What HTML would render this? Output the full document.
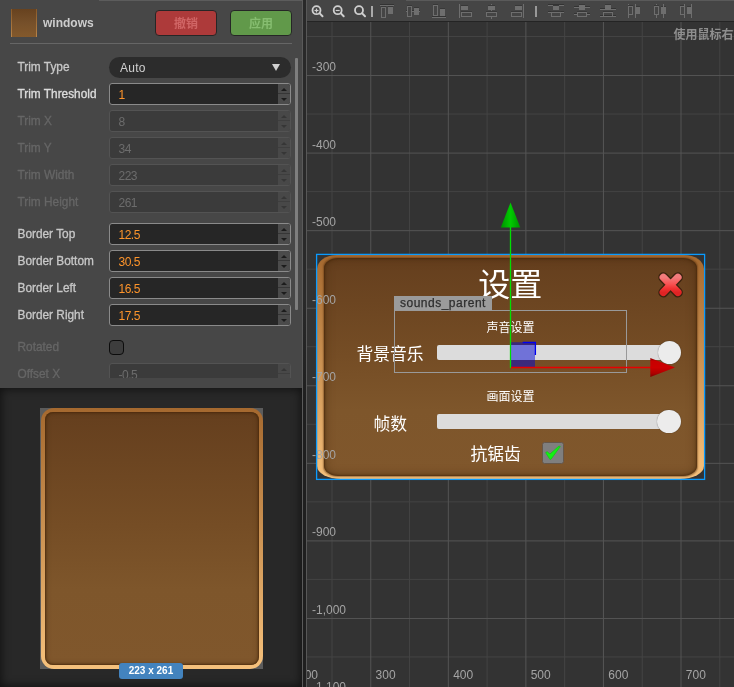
<!DOCTYPE html>
<html><head><meta charset="utf-8"><title>windows</title>
<style>
html,body{margin:0;padding:0}
body{width:734px;height:687px;overflow:hidden;position:relative;background:#474747;font-family:"Liberation Sans","Noto Sans CJK SC",sans-serif;font-size:12px;color:#ccc}
div,span{position:absolute;box-sizing:border-box}
.lbl{left:17.5px;height:14px;line-height:14px;white-space:nowrap;color:#c8c8c8;font-size:11.85px;-webkit-text-stroke:0.3px #c8c8c8}
.lbl.dis{color:#666;-webkit-text-stroke:0.3px #666}
.fld{left:109px;width:182px;height:22px;border:1px solid #8a8a8a;border-radius:3px;background:#262626;overflow:hidden}
.fld.dis{border-color:#535353;background:#3b3b3b}
.fld .v{left:8.5px;top:0;height:22px;line-height:22px;color:#fd942b;font-size:12px;letter-spacing:-0.5px;white-space:nowrap}
.fld.dis .v{color:#6c6c6c}
.fld .sp{right:0;top:0;width:12px;height:20px;background:#4b4b4b}
.fld .sp i{position:absolute;left:0;top:9px;width:12px;height:1px;background:#363636}
.fld .sp b{position:absolute;left:3px;width:0;height:0;border-left:3.5px solid transparent;border-right:3.5px solid transparent}
.fld .sp b.u{top:4px;border-bottom:3.5px solid #1c1c1c}
.fld .sp b.d{top:14px;border-top:3.5px solid #1c1c1c}
.fld.dis .sp b.u{border-bottom-color:#363636}
.fld.dis .sp{background:#484848}
.fld.dis .sp i{background:#3e3e3e}
.fld.dis .sp b.d{border-top-color:#363636}
.btn{top:10px;height:26px;border:1px solid #262626;border-radius:4px;text-align:center;line-height:26px;font-weight:bold;font-size:12px}
.cj{font-family:"Liberation Sans","Noto Sans CJK SC",sans-serif;color:#fff;white-space:nowrap}
</style></head><body><div id="root" style="left:0;top:0;width:734px;height:687px;overflow:hidden;will-change:transform">

<div style="left:99px;top:0;width:203px;height:1px;background:#5c5c5c"></div>
<div style="left:11px;top:9px;width:26px;height:28px;background:linear-gradient(#8a5a29,#b8844a)"></div><div style="left:12.3px;top:9px;width:23.4px;height:28px;background:linear-gradient(#67421f,#76502a 50%,#83592c)"></div>
<div style="left:43px;top:16px;height:14px;line-height:14px;font-weight:bold;color:#cdcdcd;white-space:nowrap">windows</div>
<div class="btn" style="left:155px;width:62px;background:#ad3a3a;color:#d06565">撤销</div>
<div class="btn" style="left:230px;width:62px;background:#61994a;color:#86bd70">应用</div>
<div style="left:10px;top:43px;width:282px;height:1px;background:#666"></div>
<div style="left:0;top:50px;width:302px;height:328px;overflow:hidden">
<div class="lbl" style="top:10px">Trim Type</div>
<div style="left:109px;top:7px;width:182px;height:21px;border-radius:11px;background:#2c2c2c"><span style="left:11px;top:0;height:21px;line-height:22px;color:#d0d0d0;font-size:12px;letter-spacing:0.25px">Auto</span><span style="left:163px;top:7px;width:0;height:0;border-left:4.5px solid transparent;border-right:4.5px solid transparent;border-top:7px solid #d0d0d0"></span></div>
<div class="lbl" style="top:37px;color:#dcdcdc;-webkit-text-stroke:0.35px #dcdcdc">Trim Threshold</div>
<div class="fld" style="top:33px"><span class="v">1</span><span class="sp"><b class="u"></b><i></i><b class="d"></b></span></div>
<div class="lbl dis" style="top:64px">Trim X</div>
<div class="fld dis" style="top:60px"><span class="v">8</span><span class="sp"><b class="u"></b><i></i><b class="d"></b></span></div>
<div class="lbl dis" style="top:91px">Trim Y</div>
<div class="fld dis" style="top:87px"><span class="v">34</span><span class="sp"><b class="u"></b><i></i><b class="d"></b></span></div>
<div class="lbl dis" style="top:118px">Trim Width</div>
<div class="fld dis" style="top:114px"><span class="v">223</span><span class="sp"><b class="u"></b><i></i><b class="d"></b></span></div>
<div class="lbl dis" style="top:145px">Trim Height</div>
<div class="fld dis" style="top:141px"><span class="v">261</span><span class="sp"><b class="u"></b><i></i><b class="d"></b></span></div>
<div class="lbl" style="top:177px">Border Top</div>
<div class="fld" style="top:173px"><span class="v">12.5</span><span class="sp"><b class="u"></b><i></i><b class="d"></b></span></div>
<div class="lbl" style="top:204px">Border Bottom</div>
<div class="fld" style="top:200px"><span class="v">30.5</span><span class="sp"><b class="u"></b><i></i><b class="d"></b></span></div>
<div class="lbl" style="top:231px">Border Left</div>
<div class="fld" style="top:227px"><span class="v">16.5</span><span class="sp"><b class="u"></b><i></i><b class="d"></b></span></div>
<div class="lbl" style="top:258px">Border Right</div>
<div class="fld" style="top:254px"><span class="v">17.5</span><span class="sp"><b class="u"></b><i></i><b class="d"></b></span></div>
<div class="lbl dis" style="top:290px">Rotated</div>
<div style="left:109px;top:290px;width:15px;height:15px;border:1.5px solid #0c0c0c;border-radius:4px;background:#3d3d3d"></div>
<div class="lbl dis" style="top:317px">Offset X</div>
<div class="fld dis" style="top:313px"><span class="v">-0.5</span><span class="sp"><b class="u"></b><i></i><b class="d"></b></span></div>
</div>
<div style="left:295px;top:58px;width:3px;height:252px;background:#7e7e7e;border-radius:1px"></div>
<div style="left:0;top:388px;width:302px;height:299px;background:#282828;box-shadow:inset 0 0 10px 1px rgba(0,0,0,.6)"></div>
<div style="left:40px;top:408px;width:223px;height:261px;background:#5c5c5c"></div>
<div style="left:41px;top:408px;width:222px;height:261px;border-radius:13px;background:linear-gradient(#a5692f,#cd9454 50%,#f6c17c)"></div>
<div style="left:45px;top:412px;width:213.8px;height:253px;border-radius:8px;background:linear-gradient(#653f1e,#754d25 45%,#7e562b 70%,#80572c);box-shadow:inset 0 0 2px 1px rgba(70,38,8,.7),inset 0 0 5px 1px rgba(70,40,12,.4)"></div>
<div style="left:119px;top:663px;width:64px;height:16px;border-radius:3px;background:#4383be;color:#fff;font-weight:bold;font-size:10px;line-height:16px;text-align:center">223 x 261</div>
<div style="left:302px;top:0;width:1px;height:687px;background:#5a5a5a"></div>
<div style="left:303px;top:0;width:3px;height:687px;background:linear-gradient(#292929,#292929 300px,#1f1f1f 400px,#1f1f1f)"></div>
<div style="left:306px;top:0;width:1px;height:687px;background:#585858"></div>
<div style="left:307px;top:0;width:427px;height:687px;background:#333;overflow:hidden">
<svg width="427" height="687" style="position:absolute;left:0;top:0">
<line x1="24.99" y1="0" x2="24.99" y2="687" stroke="#444" stroke-width="1"/>
<line x1="102.55" y1="0" x2="102.55" y2="687" stroke="#444" stroke-width="1"/>
<line x1="180.11" y1="0" x2="180.11" y2="687" stroke="#444" stroke-width="1"/>
<line x1="257.67" y1="0" x2="257.67" y2="687" stroke="#444" stroke-width="1"/>
<line x1="335.23" y1="0" x2="335.23" y2="687" stroke="#444" stroke-width="1"/>
<line x1="412.79" y1="0" x2="412.79" y2="687" stroke="#444" stroke-width="1"/>
<line x1="0" y1="36.48" x2="427" y2="36.48" stroke="#444" stroke-width="1"/>
<line x1="0" y1="114.04" x2="427" y2="114.04" stroke="#444" stroke-width="1"/>
<line x1="0" y1="191.60" x2="427" y2="191.60" stroke="#444" stroke-width="1"/>
<line x1="0" y1="269.16" x2="427" y2="269.16" stroke="#444" stroke-width="1"/>
<line x1="0" y1="346.72" x2="427" y2="346.72" stroke="#444" stroke-width="1"/>
<line x1="0" y1="424.28" x2="427" y2="424.28" stroke="#444" stroke-width="1"/>
<line x1="0" y1="501.84" x2="427" y2="501.84" stroke="#444" stroke-width="1"/>
<line x1="0" y1="579.40" x2="427" y2="579.40" stroke="#444" stroke-width="1"/>
<line x1="0" y1="656.96" x2="427" y2="656.96" stroke="#444" stroke-width="1"/>
<line x1="63.77" y1="0" x2="63.77" y2="687" stroke="#555" stroke-width="1"/>
<line x1="141.33" y1="0" x2="141.33" y2="687" stroke="#555" stroke-width="1"/>
<line x1="218.89" y1="0" x2="218.89" y2="687" stroke="#555" stroke-width="1"/>
<line x1="296.45" y1="0" x2="296.45" y2="687" stroke="#555" stroke-width="1"/>
<line x1="374.01" y1="0" x2="374.01" y2="687" stroke="#555" stroke-width="1"/>
<line x1="0" y1="75.54" x2="427" y2="75.54" stroke="#555" stroke-width="1"/>
<line x1="0" y1="153.10" x2="427" y2="153.10" stroke="#555" stroke-width="1"/>
<line x1="0" y1="230.66" x2="427" y2="230.66" stroke="#555" stroke-width="1"/>
<line x1="0" y1="308.22" x2="427" y2="308.22" stroke="#555" stroke-width="1"/>
<line x1="0" y1="385.78" x2="427" y2="385.78" stroke="#555" stroke-width="1"/>
<line x1="0" y1="463.34" x2="427" y2="463.34" stroke="#555" stroke-width="1"/>
<line x1="0" y1="540.90" x2="427" y2="540.90" stroke="#555" stroke-width="1"/>
<line x1="0" y1="618.46" x2="427" y2="618.46" stroke="#555" stroke-width="1"/>
</svg>
</div>
<div style="left:317.4px;top:255.1px;width:386.7px;height:223.6px;border-radius:20px 20px 24px 24px/14px 14px 13px 13px;background:linear-gradient(#a5692f,#cd9454 50%,#f6c17c)"></div>
<div style="left:324.4px;top:258.3px;width:372.9px;height:217.6px;border-radius:14px/10px;background:linear-gradient(#653f1e,#754d25 45%,#7e562b 70%,#80572c);box-shadow:inset 0 0 2px 1px rgba(70,38,8,.7),inset 0 0 9px 2px rgba(70,40,12,.42),0 0 1.5px 0.3px rgba(90,50,15,.5)"></div>
<div class="cj" style="left:470px;top:263px;width:80.4px;height:44px;line-height:44px;font-size:32px;text-align:center">设置</div>
<div class="cj" style="left:486.5px;top:320px;height:16px;line-height:16px;font-size:12px">声音设置</div>
<div class="cj" style="left:356.5px;top:343px;height:24px;line-height:24px;font-size:16.8px">背景音乐</div>
<div style="left:437px;top:345.2px;width:236px;height:14.8px;border-radius:2px;background:#dcdcdc"></div>
<div style="left:657.6px;top:340.8px;width:23.7px;height:23.7px;border-radius:12px;background:#ececec;box-shadow:0 0 1px rgba(0,0,0,.6)"></div>
<div class="cj" style="left:486.5px;top:389px;height:16px;line-height:16px;font-size:12px">画面设置</div>
<div class="cj" style="left:373.5px;top:412.5px;height:24px;line-height:24px;font-size:16.8px">帧数</div>
<div style="left:437px;top:414.3px;width:236px;height:14.8px;border-radius:2px;background:#dcdcdc"></div>
<div style="left:657.4px;top:409.8px;width:23.7px;height:23.7px;border-radius:12px;background:#ececec;box-shadow:0 0 1px rgba(0,0,0,.6)"></div>
<div class="cj" style="left:470.5px;top:443px;height:24px;line-height:24px;font-size:16.8px">抗锯齿</div>
<div style="left:542.2px;top:442px;width:21.6px;height:21.6px;border-radius:2.5px;background:#7f7f7f;border:1px solid #66574a"></div>
<div style="left:312px;top:59.9px;height:14px;line-height:14px;font-size:12px;color:#a4a4a4;white-space:nowrap">-300</div>
<div style="left:312px;top:137.5px;height:14px;line-height:14px;font-size:12px;color:#a4a4a4;white-space:nowrap">-400</div>
<div style="left:312px;top:215.0px;height:14px;line-height:14px;font-size:12px;color:#a4a4a4;white-space:nowrap">-500</div>
<div style="left:312px;top:292.6px;height:14px;line-height:14px;font-size:12px;color:#a4a4a4;white-space:nowrap">-600</div>
<div style="left:312px;top:370.1px;height:14px;line-height:14px;font-size:12px;color:#a4a4a4;white-space:nowrap">-700</div>
<div style="left:312px;top:447.7px;height:14px;line-height:14px;font-size:12px;color:#a4a4a4;white-space:nowrap">-800</div>
<div style="left:312px;top:525.3px;height:14px;line-height:14px;font-size:12px;color:#a4a4a4;white-space:nowrap">-900</div>
<div style="left:312px;top:602.8px;height:14px;line-height:14px;font-size:12px;color:#a4a4a4;white-space:nowrap">-1,000</div>
<div style="left:312px;top:680.4px;height:14px;line-height:14px;font-size:12px;color:#a4a4a4;white-space:nowrap">-1,100</div>
<div style="left:307px;top:660px;width:427px;height:27px;overflow:hidden">
<div style="left:-9.0px;top:8.3px;height:14px;line-height:14px;font-size:12px;color:#a4a4a4;white-space:nowrap">200</div>
<div style="left:68.6px;top:8.3px;height:14px;line-height:14px;font-size:12px;color:#a4a4a4;white-space:nowrap">300</div>
<div style="left:146.2px;top:8.3px;height:14px;line-height:14px;font-size:12px;color:#a4a4a4;white-space:nowrap">400</div>
<div style="left:223.7px;top:8.3px;height:14px;line-height:14px;font-size:12px;color:#a4a4a4;white-space:nowrap">500</div>
<div style="left:301.3px;top:8.3px;height:14px;line-height:14px;font-size:12px;color:#a4a4a4;white-space:nowrap">600</div>
<div style="left:378.8px;top:8.3px;height:14px;line-height:14px;font-size:12px;color:#a4a4a4;white-space:nowrap">700</div>
</div>
<svg width="734" height="687" style="position:absolute;left:0;top:0;overflow:hidden">
<defs><linearGradient id="xr" x1="0" y1="0" x2="0" y2="1"><stop offset="0" stop-color="#f27c7c"/><stop offset="0.45" stop-color="#f85252"/><stop offset="0.75" stop-color="#f03232"/><stop offset="1" stop-color="#e02424"/></linearGradient><linearGradient id="ga" x1="0" y1="0" x2="1" y2="0"><stop offset="0" stop-color="#009000"/><stop offset="0.5" stop-color="#00cc00"/><stop offset="1" stop-color="#009000"/></linearGradient><linearGradient id="ra" x1="0" y1="0" x2="0" y2="1"><stop offset="0" stop-color="#8e0000"/><stop offset="0.18" stop-color="#c80000"/><stop offset="0.5" stop-color="#cc0000"/><stop offset="0.8" stop-color="#b00000"/><stop offset="1" stop-color="#7c0000"/></linearGradient></defs>
<g stroke-linecap="round"><path d="M663.3 277.3 L677.9 292.4 M677.9 277.3 L663.3 292.4" stroke="#3a220e" stroke-width="10" fill="none"/><path d="M663.3 277.3 L677.9 292.4 M677.9 277.3 L663.3 292.4" stroke="url(#xr)" stroke-width="7.4" fill="none"/></g>
<path d="M545.8 452.2 L547.4 451.8 L550 454 L559 446 L560.3 446.5 L551.2 459 L550 459.5 L546 453.3 Z" fill="#12f212" stroke="#16c016" stroke-width="0.7" stroke-linejoin="round"/>
<rect x="394.5" y="310.5" width="232" height="62" fill="none" stroke="#999" stroke-width="1"/>
<rect x="394" y="296" width="98" height="14.5" fill="#9b9b9b"/>
<rect x="316.6" y="254.4" width="388" height="225" fill="none" stroke="#0a9bff" stroke-width="1.3"/>
<rect x="511" y="342.2" width="24" height="24.8" fill="rgba(0,4,212,0.49)"/>
<path d="M522.7 342.5 H535.4 V355" stroke="#0000f0" stroke-width="1.3" fill="none"/>
<line x1="510.5" y1="227" x2="510.5" y2="368" stroke="#00e000" stroke-width="1.3"/>
<line x1="511" y1="367.5" x2="651" y2="367.5" stroke="#e80000" stroke-width="1.3"/>
<path d="M510.5 202.5 L520.3 227.5 L500.8 227.5 Z" fill="url(#ga)"/>
<path d="M675 367.4 L650.3 358 L650.3 377 Z" fill="url(#ra)"/>
</svg>
<div style="left:400px;top:296px;height:14px;line-height:14px;font-size:12px;letter-spacing:0.5px;color:#2e2e2e;-webkit-text-stroke:0.25px #2e2e2e;white-space:nowrap">sounds_parent</div>
<div style="left:307px;top:0;width:427px;height:21px;background:#454545;border-bottom:1px solid #242424;height:22px"></div>
<div style="left:406px;top:0;width:328px;height:1px;background:#5a5a5a"></div>
<svg width="734" height="22" style="position:absolute;left:0;top:0">
<circle cx="316.5" cy="10.2" r="4" fill="none" stroke="#cfcfcf" stroke-width="1.8"/>
<line x1="319.7" y1="13.4" x2="322.5" y2="16.2" stroke="#cfcfcf" stroke-width="2" stroke-linecap="round"/>
<line x1="314.5" y1="10.5" x2="318.5" y2="10.5" stroke="#cfcfcf" stroke-width="1.2"/>
<line x1="316.5" y1="8.5" x2="316.5" y2="12.5" stroke="#cfcfcf" stroke-width="1.2"/>
<circle cx="337.7" cy="10.2" r="4" fill="none" stroke="#cfcfcf" stroke-width="1.8"/>
<line x1="340.9" y1="13.4" x2="343.7" y2="16.2" stroke="#cfcfcf" stroke-width="2" stroke-linecap="round"/>
<line x1="335.7" y1="10.5" x2="339.7" y2="10.5" stroke="#cfcfcf" stroke-width="1.2"/>
<circle cx="359" cy="10.2" r="4" fill="none" stroke="#cfcfcf" stroke-width="1.8"/>
<line x1="362.2" y1="13.4" x2="365" y2="16.2" stroke="#cfcfcf" stroke-width="2" stroke-linecap="round"/>
<rect x="371" y="6" width="2" height="11" fill="#aaa"/>
<rect x="535" y="6" width="2" height="11" fill="#999"/>
<rect x="380" y="4" width="14" height="1" fill="#333"/>
<rect x="380" y="5" width="14" height="1" fill="#6e6e6e"/>
<rect x="381" y="6" width="5" height="1" fill="#383838"/>
<rect x="381.5" y="7.5" width="4" height="10" fill="none" stroke="#6e6e6e" stroke-width="1"/>
<rect x="388" y="6" width="5" height="1" fill="#383838"/>
<rect x="388" y="7" width="5" height="7" fill="#6e6e6e"/>
<rect x="406" y="10" width="14" height="1" fill="#333"/>
<rect x="406" y="11" width="14" height="1" fill="#6e6e6e"/>
<rect x="407" y="5" width="5" height="1" fill="#383838"/>
<rect x="408" y="7" width="3" height="9" fill="#454545"/>
<rect x="407.5" y="6.5" width="4" height="10" fill="none" stroke="#6e6e6e" stroke-width="1"/>
<rect x="414" y="7" width="5" height="1" fill="#383838"/>
<rect x="414" y="8" width="5" height="7" fill="#6e6e6e"/>
<rect x="432" y="16" width="14" height="1" fill="#333"/>
<rect x="432" y="17" width="14" height="1" fill="#6e6e6e"/>
<rect x="433" y="4" width="5" height="1" fill="#383838"/>
<rect x="433.5" y="5.5" width="4" height="10" fill="none" stroke="#6e6e6e" stroke-width="1"/>
<rect x="440" y="8" width="5" height="1" fill="#383838"/>
<rect x="440" y="9" width="5" height="7" fill="#6e6e6e"/>
<rect x="459" y="4" width="1" height="14" fill="#6e6e6e"/>
<rect x="461" y="5" width="7" height="1" fill="#383838"/>
<rect x="461" y="6" width="7" height="4" fill="#6e6e6e"/>
<rect x="461" y="11" width="11" height="1" fill="#383838"/>
<rect x="461.5" y="12.5" width="10" height="4" fill="none" stroke="#6e6e6e" stroke-width="1"/>
<rect x="491" y="4" width="1" height="15" fill="#6e6e6e"/>
<rect x="488" y="5" width="7" height="1" fill="#383838"/>
<rect x="488" y="6" width="7" height="4" fill="#6e6e6e"/>
<rect x="486" y="11" width="11" height="1" fill="#383838"/>
<rect x="487" y="13" width="9" height="3" fill="#454545"/>
<rect x="486.5" y="12.5" width="10" height="4" fill="none" stroke="#6e6e6e" stroke-width="1"/>
<rect x="523" y="4" width="1" height="14" fill="#6e6e6e"/>
<rect x="515" y="5" width="7" height="1" fill="#383838"/>
<rect x="515" y="6" width="7" height="4" fill="#6e6e6e"/>
<rect x="511" y="11" width="11" height="1" fill="#383838"/>
<rect x="511.5" y="12.5" width="10" height="4" fill="none" stroke="#6e6e6e" stroke-width="1"/>
<rect x="548" y="4" width="16" height="1" fill="#333"/>
<rect x="548" y="5" width="16" height="1" fill="#6e6e6e"/>
<rect x="553" y="5" width="6" height="1" fill="#383838"/>
<rect x="553" y="6" width="6" height="4" fill="#6e6e6e"/>
<rect x="548" y="11" width="16" height="1" fill="#333"/>
<rect x="548" y="12" width="16" height="1" fill="#6e6e6e"/>
<rect x="551" y="11" width="10" height="1" fill="#383838"/>
<rect x="551.5" y="12.5" width="9" height="4" fill="none" stroke="#6e6e6e" stroke-width="1"/>
<rect x="574" y="6" width="16" height="1" fill="#333"/>
<rect x="574" y="7" width="16" height="1" fill="#6e6e6e"/>
<rect x="579" y="4" width="6" height="1" fill="#383838"/>
<rect x="579" y="5" width="6" height="5" fill="#6e6e6e"/>
<rect x="574" y="13" width="16" height="1" fill="#333"/>
<rect x="574" y="14" width="16" height="1" fill="#6e6e6e"/>
<rect x="577" y="11" width="10" height="1" fill="#383838"/>
<rect x="578" y="13" width="8" height="3" fill="#454545"/>
<rect x="577.5" y="12.5" width="9" height="4" fill="none" stroke="#6e6e6e" stroke-width="1"/>
<rect x="600" y="8" width="16" height="1" fill="#333"/>
<rect x="600" y="9" width="16" height="1" fill="#6e6e6e"/>
<rect x="605" y="4" width="6" height="1" fill="#383838"/>
<rect x="605" y="5" width="6" height="4" fill="#6e6e6e"/>
<rect x="600" y="15" width="16" height="1" fill="#333"/>
<rect x="600" y="16" width="16" height="1" fill="#6e6e6e"/>
<rect x="603" y="11" width="10" height="1" fill="#383838"/>
<rect x="603.5" y="12.5" width="9" height="4" fill="none" stroke="#6e6e6e" stroke-width="1"/>
<rect x="628" y="4" width="1" height="14" fill="#6e6e6e"/>
<rect x="628" y="5" width="5" height="1" fill="#383838"/>
<rect x="628.5" y="6.5" width="4" height="8" fill="none" stroke="#6e6e6e" stroke-width="1"/>
<rect x="635" y="4" width="1" height="14" fill="#6e6e6e"/>
<rect x="636" y="6" width="4" height="1" fill="#383838"/>
<rect x="636" y="7" width="4" height="7" fill="#6e6e6e"/>
<rect x="656" y="4" width="1" height="14" fill="#6e6e6e"/>
<rect x="654" y="5" width="5" height="1" fill="#383838"/>
<rect x="655" y="7" width="3" height="7" fill="#454545"/>
<rect x="654.5" y="6.5" width="4" height="8" fill="none" stroke="#6e6e6e" stroke-width="1"/>
<rect x="661" y="6" width="5" height="1" fill="#383838"/>
<rect x="661" y="7" width="5" height="7" fill="#6e6e6e"/>
<rect x="663" y="4" width="1" height="14" fill="#6e6e6e"/>
<rect x="680" y="5" width="5" height="1" fill="#383838"/>
<rect x="680.5" y="6.5" width="4" height="8" fill="none" stroke="#6e6e6e" stroke-width="1"/>
<rect x="684" y="4" width="1" height="14" fill="#6e6e6e"/>
<rect x="687" y="6" width="5" height="1" fill="#383838"/>
<rect x="687" y="7" width="5" height="7" fill="#6e6e6e"/>
<rect x="691" y="4" width="1" height="14" fill="#6e6e6e"/>
</svg>
<div style="left:673.5px;top:27px;height:16px;line-height:16px;font-size:12px;font-weight:bold;color:#8e8e8e;white-space:nowrap;font-family:'Liberation Sans','Noto Sans CJK SC',sans-serif">使用鼠标右键</div>
</div></body></html>
